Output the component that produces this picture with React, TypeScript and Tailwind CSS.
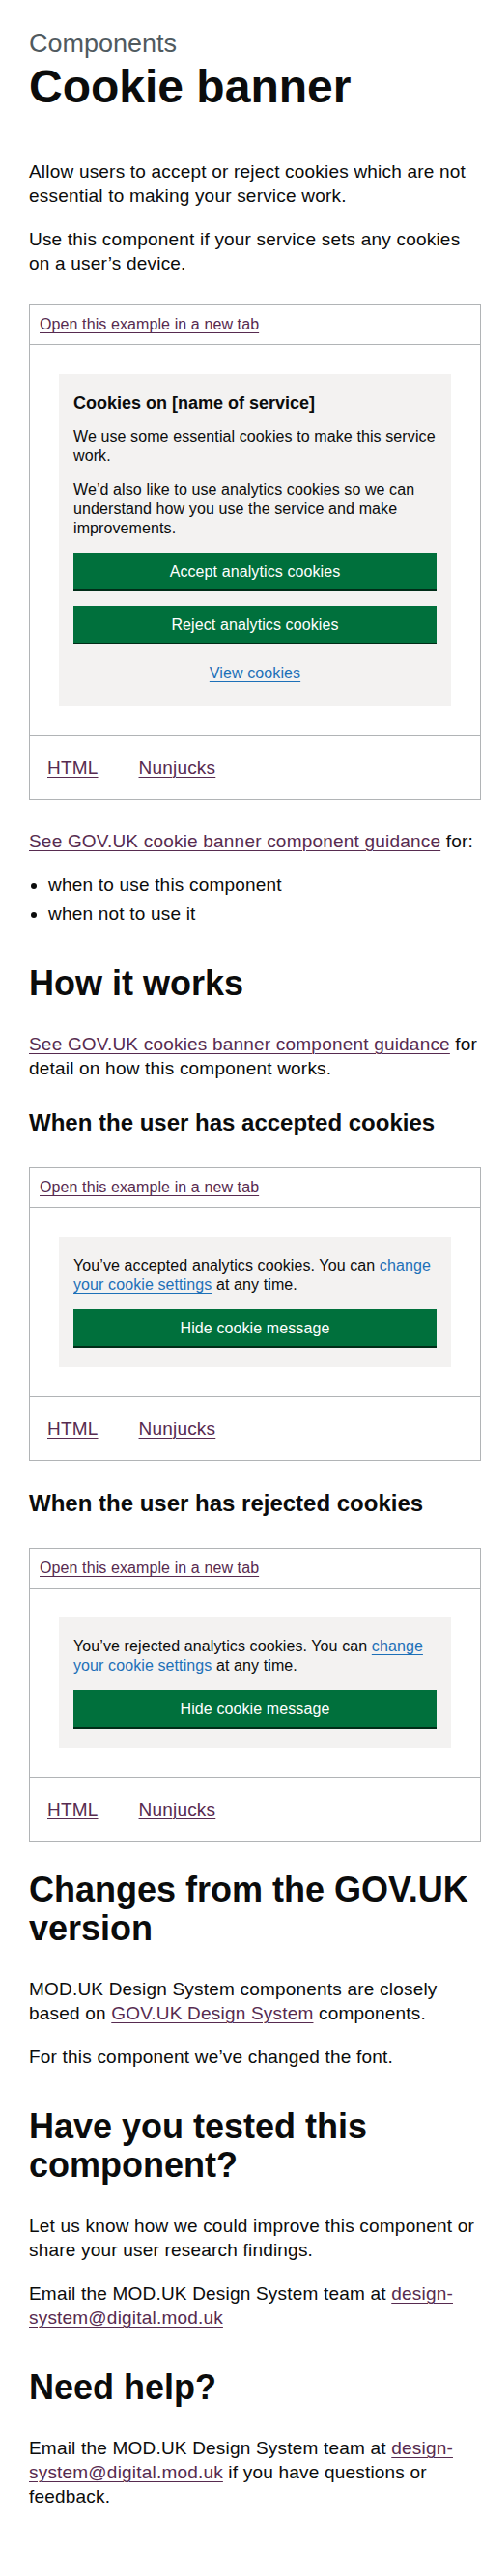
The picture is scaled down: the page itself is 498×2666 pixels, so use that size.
import React from "react";

const link =
  "text-[#572b50] underline decoration-1 underline-offset-[0.1578em]";
const blueLink =
  "text-[#1d70b8] underline decoration-1 underline-offset-[0.1578em]";
const body = "text-[19px] leading-[25px] tracking-[0.2px]";
const small = "text-[16px] leading-[20px] tracking-[0.1px]";

function Button({ children, className = "" }: { children: React.ReactNode; className?: string }) {
  return (
    <div
      className={
        "w-full h-[38px] bg-[#00703c] text-white text-[16px] leading-[19px] tracking-[0.1px] flex items-center justify-center shadow-[0_2px_0_#002d18] " +
        className
      }
    >
      <span className="pt-[1px]">{children}</span>
    </div>
  );
}

function Example({ children }: { children: React.ReactNode }) {
  return (
    <div className="border border-[#b1b4b6] w-[468px]">
      <div className={"px-[10px] py-[10px] border-b border-[#b1b4b6] " + small}>
        <a className={link}>Open this example in a new tab</a>
      </div>
      <div className="p-[30px]">
        <div className="bg-[#f3f2f1] px-[15px] text-[#0b0c0c]">{children}</div>
      </div>
      <div className={"border-t border-[#b1b4b6] py-[20px] pl-[18px] flex gap-[42px] " + body}>
        <a className={link}>HTML</a>
        <a className={link}>Nunjucks</a>
      </div>
    </div>
  );
}

export default function App() {
  return (
    <div className="w-[498px] pl-[30px] pt-[30px] pb-[70px] bg-white text-[#0b0c0c] font-['Liberation_Sans',Arial,sans-serif]">
      <div className="w-[468px]">
        <div className="text-[27px] leading-[30px] text-[#505a5f] mb-[5px]">Components</div>
        <div className="text-[48px] leading-[50px] font-bold mb-[50px]">Cookie banner</div>
        <p className={body + " mb-[20px]"}>
          Allow users to accept or reject cookies which are not essential to making your service work.
        </p>
        <p className={body + " mb-[30px]"}>
          Use this component if your service sets any cookies on a user’s device.
        </p>

        <Example>
          <div className="pt-[20px] pb-[24px]">
            <div className="text-[18px] leading-[20px] font-bold mb-[15px]">Cookies on [name of service]</div>
            <p className={small + " mb-[15px]"}>
              We use some essential cookies to make this service work.
            </p>
            <p className={small + " mb-[15px]"}>
              We’d also like to use analytics cookies so we can understand how you use the service and make improvements.
            </p>
            <Button className="mb-[17px]">Accept analytics cookies</Button>
            <Button className="mb-[22px]">Reject analytics cookies</Button>
            <div className={small + " text-center"}>
              <a className={blueLink}>View cookies</a>
            </div>
          </div>
        </Example>

        <p className={body + " mt-[30px] mb-[20px]"}>
          <a className={link}>See GOV.UK cookie banner component guidance</a> for:
        </p>
        <ul className={body + " list-disc pl-[20px] mb-[20px]"}>
          <li className="mb-[5px]">when to use this component</li>
          <li className="mb-[5px]">when not to use it</li>
        </ul>

        <h2 className="text-[36px] leading-[40px] font-bold pt-[20px] mb-[30px]">How it works</h2>
        <p className={body + " mb-[20px]"}>
          <a className={link}>See GOV.UK cookies banner component guidance</a> for detail on how this component works.
        </p>

        <h3 className="text-[24px] leading-[30px] font-bold pt-[9px] mb-[31px]">When the user has accepted cookies</h3>
        <Example>
          <div className="pt-[20px] pb-[22px]">
            <p className={small + " mb-[15px]"}>
              You’ve accepted analytics cookies. You can <a className={blueLink}>change your cookie settings</a> at any time.
            </p>
            <Button>Hide cookie message</Button>
          </div>
        </Example>

        <h3 className="text-[24px] leading-[30px] font-bold mt-[29px] mb-[31px]">When the user has rejected cookies</h3>
        <Example>
          <div className="pt-[20px] pb-[22px]">
            <p className={small + " mb-[15px]"}>
              You’ve rejected analytics cookies. You can <a className={blueLink}>change your cookie settings</a> at any time.
            </p>
            <Button>Hide cookie message</Button>
          </div>
        </Example>

        <h2 className="text-[36px] leading-[40px] font-bold mt-[30px] mb-[30px]">Changes from the GOV.UK version</h2>
        <p className={body + " mb-[20px]"}>
          MOD.UK Design System components are closely based on <a className={link}>GOV.UK Design System</a> components.
        </p>
        <p className={body + " mb-[20px]"}>For this component we’ve changed the font.</p>

        <h2 className="text-[36px] leading-[40px] font-bold pt-[20px] mb-[30px]">Have you tested this component?</h2>
        <p className={body + " mb-[20px]"}>
          Let us know how we could improve this component or share your user research findings.
        </p>
        <p className={body + " mb-[20px]"}>
          Email the MOD.UK Design System team at <a className={link}>design-system@digital.mod.uk</a>
        </p>

        <h2 className="text-[36px] leading-[40px] font-bold pt-[20px] mb-[30px]">Need help?</h2>
        <p className={body}>
          Email the MOD.UK Design System team at <a className={link}>design-system@digital.mod.uk</a> if you have questions or feedback.
        </p>
      </div>
    </div>
  );
}
